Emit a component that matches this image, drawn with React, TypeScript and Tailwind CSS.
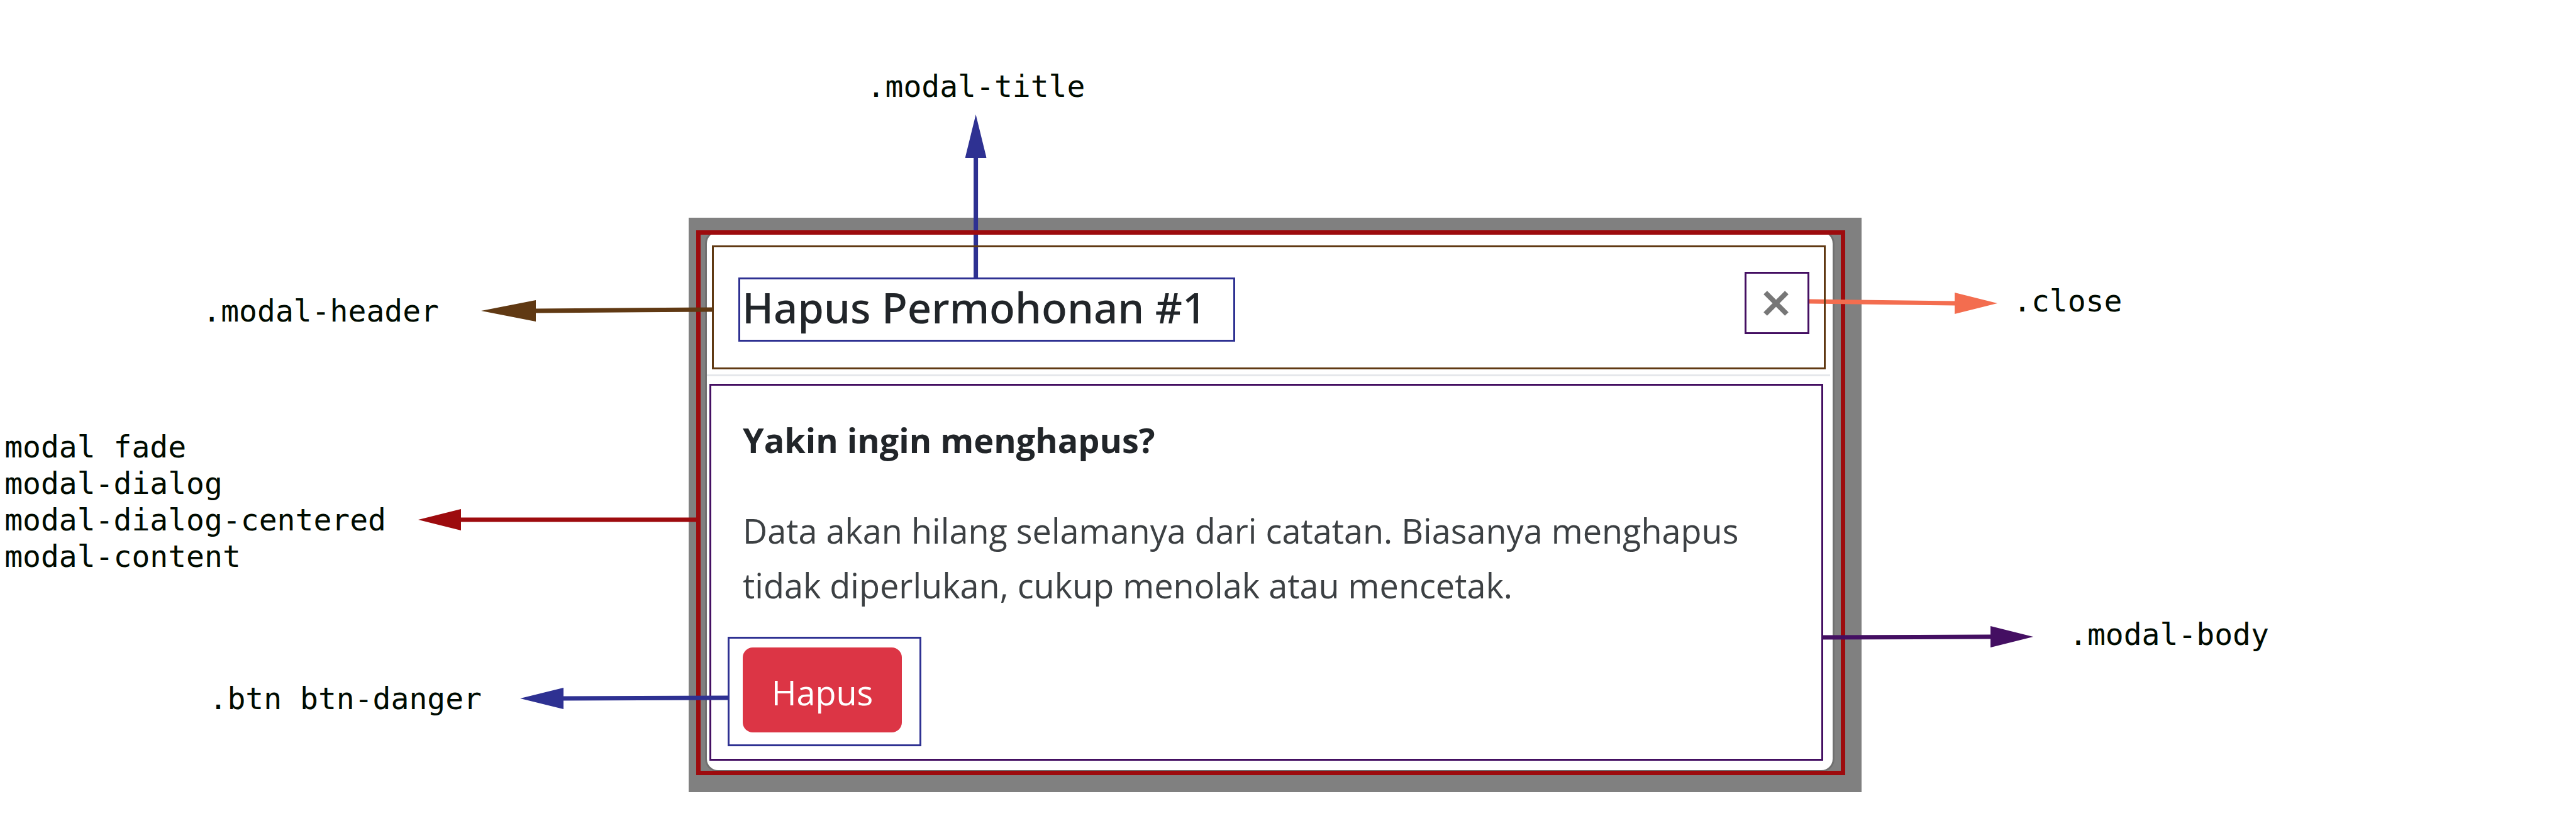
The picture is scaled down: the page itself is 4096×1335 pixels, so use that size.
import type { ReactNode } from "react";

const BLUE = "#2e3192";
const PURPLE = "#440f62";
const BROWN = "#603913";
const RED = "#9d0b0e";
const CORAL = "#f36d4f";

type ArrowProps = { color: string; length: number; head: number; tilt?: number };

/* Arrow whose tip is on the left; tilt is the rise of the line's far end. */
function ArrowLeft({ color, length, head, tilt = 0 }: ArrowProps) {
  return (
    <svg width={length} height="34" viewBox={`0 0 ${length} 34`} fill={color} className="shrink-0 overflow-visible" aria-hidden="true">
      <path d={`M0 17 L${head} 0 V34 Z`} />
      <path d={`M${head - 1} 13.5 L${length} ${13.5 - tilt} V${20.5 - tilt} L${head - 1} 20.5 Z`} />
    </svg>
  );
}

/* Arrow whose tip is on the right; tilt is the rise of the line's near end. */
function ArrowRight({ color, length, head, tilt = 0 }: ArrowProps) {
  const neck = length - head;
  return (
    <svg width={length} height="34" viewBox={`0 0 ${length} 34`} fill={color} className="mt-4 shrink-0 overflow-visible" aria-hidden="true">
      <path d={`M${length} 17 L${neck} 0 V34 Z`} />
      <path d={`M0 ${13.5 - tilt} L${neck + 1} 13.5 V20.5 L0 ${20.5 - tilt} Z`} />
    </svg>
  );
}

function ArrowUp({ color }: { color: string }) {
  return (
    <svg width="34" height="262" viewBox="0 0 34 262" fill={color} className="shrink-0" aria-hidden="true">
      <path d="M17 0 L34 69 H20.5 V262 H13.5 V69 H0 Z" />
    </svg>
  );
}

function Label({ children }: { children: ReactNode }) {
  return (
    <code className="block whitespace-pre font-['DejaVu_Sans_Mono',monospace] text-[48px] leading-[58px] text-[#000b00]">
      {children}
    </code>
  );
}

export default function App() {
  return (
    <main className="grid min-h-screen grid-cols-[1095fr_1865fr_1136fr] items-start overflow-hidden bg-white pt-[346px] font-['Open_Sans','Noto_Sans',sans-serif] text-[#212529]">
      <div className="col-start-2 bg-[#808080] pt-5 pr-[26px] pb-[27px] pl-3">
        <div className="relative pt-0 pr-[17px] pb-[5px] pl-[14px]">
          <div className="pointer-events-none absolute inset-0 z-10 border-[7px] border-[#9d0b0e]" />
          <div className="absolute top-[315px] right-full z-20 flex items-end gap-[51px]">
            <Label>{"modal fade\nmodal-dialog\nmodal-dialog-centered\nmodal-content"}</Label>
            <div className="mb-[70px]">
              <ArrowLeft color={RED} length={442} head={68} />
            </div>
          </div>

          <section role="dialog" aria-labelledby="modal-title" className="rounded-[21px] border-[3px] border-[#707070] bg-white pb-[15px]">
            <header className="relative mt-[21px] mr-[11px] ml-2 flex h-[197px] items-start justify-between pt-[42px] pr-[26px] pl-[42px]">
              <div className="pointer-events-none absolute inset-0 z-30 border-[3px] border-[#603913]" />
              <div className="absolute top-[75px] right-full z-20 flex items-center gap-[67px]">
                <Label>.modal-header</Label>
                <ArrowLeft color={BROWN} length={367} head={87} tilt={2} />
              </div>

              <div className="relative mt-[9px] w-[790px] border-[3px] border-[#2e3192] pb-2 pl-[3px]">
                <h1 id="modal-title" className="font-['Noto_Sans',sans-serif] text-[67px] leading-[88px] font-medium whitespace-nowrap">
                  Hapus Permohonan #1
                </h1>
                <div className="absolute bottom-full left-[375px] flex -translate-x-1/2 flex-col items-center gap-4">
                  <Label>.modal-title</Label>
                  <ArrowUp color={BLUE} />
                </div>
              </div>

              <div className="relative">
                <button type="button" aria-label="Close" className="flex h-[99px] w-[103px] items-center justify-center border-[3px] border-[#440f62] pr-1">
                  <svg width="40" height="40" viewBox="0 0 40 40" stroke="#777777" strokeWidth="8" aria-hidden="true">
                    <path d="M3 3 L37 37 M37 3 L3 37" />
                  </svg>
                </button>
                <div className="absolute top-[17px] left-full z-20 flex items-start gap-[25px]">
                  <ArrowRight color={CORAL} length={299} head={68} tilt={3} />
                  <Label>.close</Label>
                </div>
              </div>
            </header>

            <hr className="mt-2 mr-1 h-[3px] border-0 bg-[#e5e7eb]" />

            <div className="relative mt-3 mr-[15px] ml-1 border-[3px] border-[#440f62] pt-[43px] pr-[50px] pb-5 pl-[50px]">
              <div className="absolute top-[366px] left-full z-20 flex items-start gap-[57px]">
                <ArrowRight color={PURPLE} length={337} head={68} tilt={-1} />
                <Label>.modal-body</Label>
              </div>
              <h2 className="text-[54px] leading-[87px] font-bold">Yakin ingin menghapus?</h2>
              <p className="mt-[57px] text-[54px] leading-[87px] text-[#3c4043]">
                Data akan hilang selamanya dari catatan. Biasanya menghapus
                <br />
                tidak diperlukan, cukup menolak atau mencetak.
              </p>
              <div className="relative mt-[38px] -ml-6 w-[308px] border-[3px] border-[#2e3192] pt-[14px] pb-[19px] pl-[21px]">
                <button type="button" className="h-[135px] w-[253px] rounded-2xl bg-[#dc3545] pt-2 text-[54px] leading-[87px] text-white">
                  Hapus
                </button>
                <div className="absolute top-[66px] right-full z-20 flex items-center gap-[61px]">
                  <Label>.btn btn-danger</Label>
                  <ArrowLeft color={BLUE} length={333} head={69} tilt={1} />
                </div>
              </div>
            </div>
          </section>
        </div>
      </div>
    </main>
  );
}
